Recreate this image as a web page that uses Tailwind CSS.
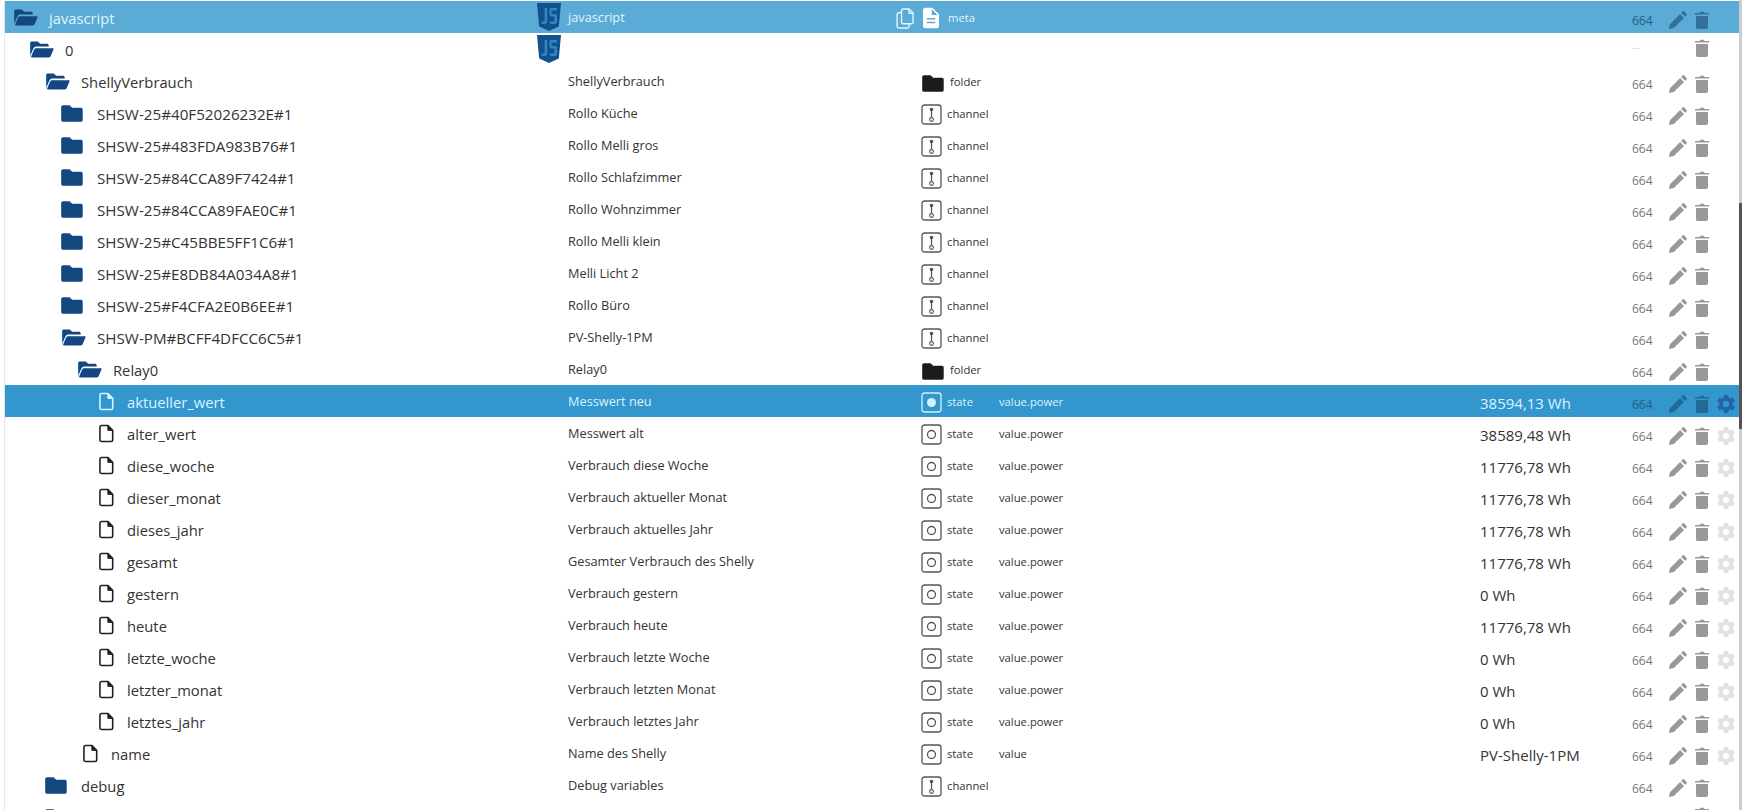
<!DOCTYPE html>
<html lang="de">
<head>
    <meta charset="UTF-8">
    <title>ioBroker Objekte</title>
    <script src="https://cdn.jsdelivr.net/npm/@tailwindcss/browser@4"></script>
</head>
<body class="bg-white overflow-hidden font-['Open_Sans','Noto_Sans',sans-serif] text-[#333]">
    <div class="flex w-[1742px] h-[810px] overflow-hidden">
        <div class="w-[5px] shrink-0 border-r border-[#e6e6e6]"></div>
        <div id="rows" class="w-[1734px] shrink-0 pt-[1px]"></div>
        <!-- Scrollbar -->
        <div class="w-[3px] shrink-0 bg-[#cdcdcd] relative">
            <div class="absolute top-[203px] left-0 w-full h-[226px] bg-[#555]"></div>
        </div>
    </div>

    <script>
        const folderOpen = '<svg viewBox="0 0 26 18" class="w-[25px] h-[17px] fill-current"><path d="M1 15.5V2.4C1 1.3 1.8.6 2.8.6h6.3l2.4 2.3h7.3c1 0 1.8.7 1.8 1.7v1.3H7.3c-1.3 0-2.1.6-2.6 1.6zM3 17.4c-.8 0-1.2-.6-.9-1.3l3.4-7.5c.3-.7.9-1 1.6-1h17.7c.8 0 1.2.6.9 1.3l-3.2 7.4c-.4.8-1 1.1-1.8 1.1z"/></svg>';
        const folderClosed = '<svg viewBox="0 0 22 17" class="w-[22px] h-[17px] fill-current"><path d="M2 .3h6.6l2.6 2.5h8.7c1 0 1.8.8 1.8 1.8v10.3c0 1-.8 1.8-1.8 1.8H2c-1 0-1.8-.8-1.8-1.8V2.1C.2 1.1 1 .3 2 .3z"/></svg>';
        const fileIcon = '<svg viewBox="0 0 16 19" class="w-[15px] h-[19px]" fill="none" stroke="currentColor" stroke-width="1.7" stroke-linejoin="round"><path d="M2.6 1h7l5 5v10.4c0 .9-.7 1.6-1.6 1.6H2.6c-.9 0-1.6-.7-1.6-1.6V2.6C1 1.7 1.7 1 2.6 1z"/><path d="M9.4 1v5.2h5.2" fill="currentColor" stroke-width="1"/></svg>';
        const jsIcon = '<svg viewBox="0 0 24 28" class="w-[24px] h-[28px]"><path d="M0 0h24l-2.2 23.5L12 28 2.200 23.5z" fill="#13508c"/><path d="M10.2 5v13.3c0 1.700-1 2.700-2.800 2.700H4.600v-2.400h1.900c.8 0 1.100-.3 1.100-1V5zM20 5v2.400h-5.400v3.700h3.600c1.200 0 1.800.7 1.800 1.800v5.900c0 1.400-.8 2.200-2.200 2.200h-5v-2.400h4.600v-5.100h-3c-1.300 0-2-.7-2-1.900V6.900C12.400 5.700 13.100 5 14.400 5z" fill="#2f86c9"/></svg>';
        const docIcon = '<svg viewBox="0 0 17 22" class="w-[16px] h-[22px] fill-white"><path fill-rule="evenodd" d="M2.5 0h7.400L17 7.100v12.400c0 1.400-1.100 2.500-2.500 2.500h-12C1.100 22 0 20.900 0 19.500v-17C0 1.100 1.100 0 2.500 0zM9.300 1.600v6.100h6.100zM4 11v1.700h9V11zm0 4v1.700h9V15z"/></svg>';
        const copyIcon = '<svg viewBox="0 0 17 20" class="w-[18px] h-[21px]" fill="none" stroke="#e4f6ff" stroke-width="1.3" stroke-linejoin="round"><path d="M6.5 1h6l3.700 3.700v9c0 .7-.6 1.300-1.300 1.300H6.500c-.7 0-1.300-.6-1.300-1.300V2.300C5.200 1.600 5.800 1 6.500 1z"/><path d="M12.300 1v4h3.900"/><path d="M5.200 4.500H2.300C1.600 4.500 1 5.100 1 5.800v11.900C1 18.400 1.600 19 2.300 19h8.800c.7 0 1.300-.6 1.300-1.300V15"/></svg>';
        const channelIcon = '<svg viewBox="0 0 21 21" class="w-[21px] h-[21px]" fill="none" stroke="currentColor"><rect x="1" y="1" width="19" height="19" rx="2.5" stroke-width="1.3"/><circle cx="10.5" cy="5.5" r="1.8" fill="currentColor" stroke="none"/><path d="M10.5 6v7" stroke-width="1.3"/><circle cx="10.5" cy="15.5" r="1.9" stroke-width="1.1"/></svg>';
        const stateIcon = '<svg viewBox="0 0 21 21" class="w-[21px] h-[21px]" fill="none" stroke="currentColor"><rect x="1" y="1" width="19" height="19" rx="2.5" stroke-width="1.3"/><circle cx="10.5" cy="10.5" r="4" stroke-width="1.3"/></svg>';
        const stateOnIcon = '<svg viewBox="0 0 21 21" class="w-[21px] h-[21px]" fill="none" stroke="currentColor"><rect x="1" y="1" width="19" height="19" rx="2.5" stroke-width="1.3"/><circle cx="10.5" cy="10.5" r="4.5" fill="currentColor" stroke="none"/></svg>';
        const pencil = '<svg viewBox="0 0 20 20" class="w-[18px] h-[18px] fill-current"><path d="M0 20l1-5.400L12.300 3.300l4.400 4.400L5.400 19zM13.500 2.100 15.300.300c.4-.4 1-.4 1.400 0l3 3c.4.4.4 1 0 1.400l-1.800 1.800z"/></svg>';
        const trash = '<svg viewBox="0 0 14 18" class="w-[14px] h-[18px] fill-current"><path d="M0 2h4.500L5.300.700h3.400L9.500 2H14v1.400H0zM1 5h12v11.300c0 .9-.7 1.700-1.700 1.700H2.700c-1 0-1.700-.8-1.700-1.700z"/></svg>';
        const gear = '<svg viewBox="2 2 20 20" class="w-[18px] h-[18px] fill-current"><path d="M19.4 13c.04-.3.1-.7.1-1s-.03-.7-.1-1l2.100-1.600c.2-.15.25-.4.12-.64l-2-3.460c-.12-.22-.37-.3-.6-.22l-2.500 1c-.5-.38-1.040-.7-1.700-.97l-.37-2.650c-.03-.24-.24-.42-.49-.42h-4c-.25 0-.46.18-.5.42l-.37 2.650c-.6.25-1.150.59-1.700.97l-2.500-1c-.22-.09-.49 0-.61.22l-2 3.460c-.13.22-.07.49.12.64L4.570 11c-.04.3-.07.68-.07 1s.03.7.07 1l-2.100 1.650c-.19.15-.25.42-.12.64l2 3.460c.12.22.39.3.61.22l2.500-1c.55.4 1.100.73 1.700.97l.37 2.650c.04.24.25.42.5.42h4c.25 0 .46-.18.49-.42l.37-2.650c.65-.26 1.200-.59 1.700-.97l2.500 1c.23.09.48 0 .6-.22l2-3.460c.13-.22.08-.49-.12-.64zM12 15.500a3.500 3.500 0 1 1 0-7 3.500 3.500 0 0 1 0 7z"/></svg>';

        const rows = [
            { level: 0, icon: 'open', name: 'javascript', title: 'javascript', js: true, type: 'meta', acl: '664', edit: true, style: 'top' },
            { level: 1, icon: 'open', name: '0', js: true, acl: '---', high: true },
            { level: 2, icon: 'open', name: 'ShellyVerbrauch', title: 'ShellyVerbrauch', type: 'folder', acl: '664', edit: true },
            { level: 3, icon: 'closed', id: true, name: 'SHSW-25#40F52026232E#1', title: 'Rollo Küche', type: 'channel', acl: '664', edit: true },
            { level: 3, icon: 'closed', id: true, name: 'SHSW-25#483FDA983B76#1', title: 'Rollo Melli gros', type: 'channel', acl: '664', edit: true },
            { level: 3, icon: 'closed', id: true, name: 'SHSW-25#84CCA89F7424#1', title: 'Rollo Schlafzimmer', type: 'channel', acl: '664', edit: true },
            { level: 3, icon: 'closed', id: true, name: 'SHSW-25#84CCA89FAE0C#1', title: 'Rollo Wohnzimmer', type: 'channel', acl: '664', edit: true },
            { level: 3, icon: 'closed', id: true, name: 'SHSW-25#C45BBE5FF1C6#1', title: 'Rollo Melli klein', type: 'channel', acl: '664', edit: true },
            { level: 3, icon: 'closed', id: true, name: 'SHSW-25#E8DB84A034A8#1', title: 'Melli Licht 2', type: 'channel', acl: '664', edit: true },
            { level: 3, icon: 'closed', id: true, name: 'SHSW-25#F4CFA2E0B6EE#1', title: 'Rollo Büro', type: 'channel', acl: '664', edit: true },
            { level: 3, icon: 'open', id: true, name: 'SHSW-PM#BCFF4DFCC6C5#1', title: 'PV-Shelly-1PM', type: 'channel', acl: '664', edit: true },
            { level: 4, icon: 'open', name: 'Relay0', title: 'Relay0', type: 'folder', acl: '664', edit: true },
            { level: 5, icon: 'file', name: 'aktueller_wert', title: 'Messwert neu', type: 'state', role: 'value.power', value: '38594,13 Wh', acl: '664', edit: true, gear: true, style: 'selected' },
            { level: 5, icon: 'file', name: 'alter_wert', title: 'Messwert alt', type: 'state', role: 'value.power', value: '38589,48 Wh', acl: '664', edit: true, gear: true },
            { level: 5, icon: 'file', name: 'diese_woche', title: 'Verbrauch diese Woche', type: 'state', role: 'value.power', value: '11776,78 Wh', acl: '664', edit: true, gear: true },
            { level: 5, icon: 'file', name: 'dieser_monat', title: 'Verbrauch aktueller Monat', type: 'state', role: 'value.power', value: '11776,78 Wh', acl: '664', edit: true, gear: true },
            { level: 5, icon: 'file', name: 'dieses_jahr', title: 'Verbrauch aktuelles Jahr', type: 'state', role: 'value.power', value: '11776,78 Wh', acl: '664', edit: true, gear: true },
            { level: 5, icon: 'file', name: 'gesamt', title: 'Gesamter Verbrauch des Shelly', type: 'state', role: 'value.power', value: '11776,78 Wh', acl: '664', edit: true, gear: true },
            { level: 5, icon: 'file', name: 'gestern', title: 'Verbrauch gestern', type: 'state', role: 'value.power', value: '0 Wh', acl: '664', edit: true, gear: true },
            { level: 5, icon: 'file', name: 'heute', title: 'Verbrauch heute', type: 'state', role: 'value.power', value: '11776,78 Wh', acl: '664', edit: true, gear: true },
            { level: 5, icon: 'file', name: 'letzte_woche', title: 'Verbrauch letzte Woche', type: 'state', role: 'value.power', value: '0 Wh', acl: '664', edit: true, gear: true },
            { level: 5, icon: 'file', name: 'letzter_monat', title: 'Verbrauch letzten Monat', type: 'state', role: 'value.power', value: '0 Wh', acl: '664', edit: true, gear: true },
            { level: 5, icon: 'file', name: 'letztes_jahr', title: 'Verbrauch letztes Jahr', type: 'state', role: 'value.power', value: '0 Wh', acl: '664', edit: true, gear: true },
            { level: 4, icon: 'file', name: 'name', title: 'Name des Shelly', type: 'state', role: 'value', value: 'PV-Shelly-1PM', acl: '664', edit: true, gear: true },
            { level: 2, icon: 'closed', name: 'debug', title: 'Debug variables', type: 'channel', acl: '664', edit: true },
            { level: 2, icon: 'closed', name: '', acl: '', high: true }
        ];

        const typeIcon = (r) => {
            if (r.type === 'meta') return `<span class="flex items-center gap-[9px] -ml-[25px] mr-[4px] translate-y-[1px]">${copyIcon}${docIcon}</span>`;
            if (r.type === 'folder') return `<span class="text-[#1c1c1c] w-[24px] pl-[1px] translate-y-[2px]">${folderClosed}</span>`;
            if (r.type === 'channel') return `<span class="text-[#555] translate-y-[1px]">${channelIcon}</span>`;
            if (r.type === 'state') return r.style === 'selected'
                ? `<span class="text-[#d2f1ff] translate-y-[1px]">${stateOnIcon}</span>`
                : `<span class="text-[#555] translate-y-[1px]">${stateIcon}</span>`;
            return '';
        };

        document.getElementById('rows').innerHTML = rows.map(r => {
            const isTop = r.style === 'top';
            const isSel = r.style === 'selected';
            const rowCls = isTop ? 'bg-[#5aabd5] text-[#e0f5ff]' : isSel ? 'bg-[#3396cc] text-[#d9f3ff]' : 'text-[#333]';
            const fileCol = isSel ? 'text-[#d9f3ff]' : 'text-[#222]';
            const icon = r.icon === 'open' ? `<span class="text-[#14477f] w-[36px] shrink-0">${folderOpen}</span>`
                : r.icon === 'closed' ? `<span class="text-[#14477f] w-[36px] shrink-0">${folderClosed}</span>`
                : `<span class="${fileCol} w-[28px] ml-[6px] shrink-0">${fileIcon}</span>`;
            const nameSize = r.id ? 'text-[15.2px]' : 'text-[14.75px]';
            const actionCol = isTop ? 'text-[#33709b]' : isSel ? 'text-[#1f6a96]' : 'text-[#999]';
            const aclCol = (isTop || isSel) ? 'text-[#1f5f88]' : 'text-[#777]';
            const gearCol = isSel ? 'text-[#2165a8]' : 'text-[#e2e2e2]';
            const iconShift = r.high ? '-translate-y-[1px]' : 'translate-y-[3px]';
            const acl = r.acl === '---'
                ? '<span class="text-[8px] text-[#bbb] -translate-y-[6px] block">---</span>'
                : r.acl;
            return `<div class="grid grid-cols-[532px_31px_353px_78px_481px_152px_37px_26px_22px_22px] items-center h-[32px] ${rowCls}">
                <div class="flex items-center h-full" style="padding-left:${8 + r.level * 16}px">${icon}<span class="${nameSize} whitespace-nowrap translate-y-[1px]">${r.name}</span></div>
                <div class="flex">${r.js ? jsIcon : ''}</div>
                <div class="text-[12.75px] whitespace-nowrap translate-y-[1px]">${r.title || ''}</div>
                <div class="flex items-center gap-[5px] text-[11.25px]">${typeIcon(r)}<span class="translate-y-[1px]">${r.type || ''}</span></div>
                <div class="text-[11.25px] translate-y-[1px]">${r.role || ''}</div>
                <div class="text-[15px] whitespace-nowrap translate-y-[2px]">${r.value || ''}</div>
                <div class="text-[12px] ${aclCol} translate-y-[4px]">${acl}</div>
                <div class="flex ${actionCol} ${iconShift}">${r.edit ? pencil : ''}</div>
                <div class="flex ${actionCol} ${iconShift}">${trash}</div>
                <div class="flex ${gearCol} translate-y-[3px]">${r.gear ? gear : ''}</div>
            </div>`;
        }).join('');
    </script>
</body>
</html>
